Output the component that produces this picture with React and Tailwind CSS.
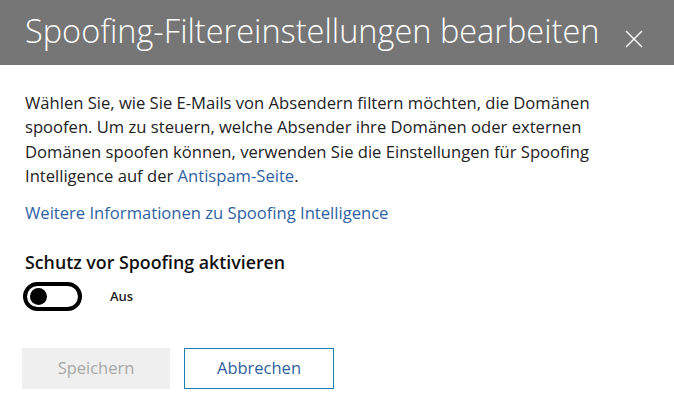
import React, { useState } from 'react';

const font = { fontFamily: '"Open Sans", "Noto Sans", sans-serif' };

const App = () => {
  const [enabled, setEnabled] = useState(false);

  return (
    <div className="w-[674px] h-[407px] bg-white overflow-hidden" style={font}>
      {/* Header */}
      <div className="h-[65px] bg-[#767676] flex items-center justify-between pl-[25px] pr-[30px]">
        <h1 className="text-[32.5px] font-light text-white leading-none whitespace-nowrap pb-[2px]">Spoofing-Filtereinstellungen bearbeiten</h1>
        <button className="w-[20px] h-[20px] flex items-center justify-center mt-[13px]">
          <svg width="18" height="18" viewBox="0 0 18 18" fill="none" stroke="white" strokeWidth="1.4">
            <path d="M1 1 L17 17 M17 1 L1 17" />
          </svg>
        </button>
      </div>

      {/* Body */}
      <div className="pl-[25px] pr-[20px] pt-[26px]">
        <p className="text-[16.6px] leading-[24.3px] text-[#222] whitespace-nowrap">
          Wählen Sie, wie Sie E-Mails von Absendern filtern möchten, die Domänen
          <br />
          spoofen. Um zu steuern, welche Absender ihre Domänen oder externen
          <br />
          Domänen spoofen können, verwenden Sie die Einstellungen für Spoofing
          <br />
          Intelligence auf der <a className="text-[#2e63a3]">Antispam-Seite</a>.
        </p>

        <a className="block mt-[13px] text-[16.6px] leading-[24px] text-[#2e63a3]">Weitere Informationen zu Spoofing Intelligence</a>

        <h2 className="mt-[25px] text-[17.8px] font-semibold text-[#111] leading-[24px]">Schutz vor Spoofing aktivieren</h2>

        <div className="flex items-center mt-[8px]">
          <button
            onClick={() => setEnabled(!enabled)}
            className="w-[59px] h-[29px] rounded-full border-[4px] border-black flex items-center px-[3px] -ml-[2px]"
          >
            <span className="w-[17px] h-[17px] rounded-full bg-black"></span>
          </button>
          <span className="ml-[28px] text-[13px] font-semibold text-[#222]">{enabled ? 'Ein' : 'Aus'}</span>
        </div>

        <div className="flex gap-[14px] mt-[37px] -ml-[3px]">
          <button disabled className="w-[148px] h-[41px] bg-[#efefef] text-[#a8a8a8] text-[16.5px]">Speichern</button>
          <button className="w-[150px] h-[41px] border border-[#1b7fb5] text-[#2e5f9e] text-[16.5px]">Abbrechen</button>
        </div>
      </div>
    </div>
  );
};

export default App;
